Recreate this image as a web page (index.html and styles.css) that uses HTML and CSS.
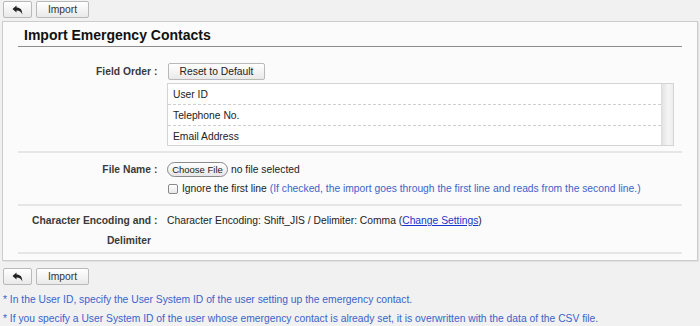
FILE: index.html
```html
<!DOCTYPE html>
<html lang="en">
<head>
  <meta charset="UTF-8">
  <title>Import Emergency Contacts</title>
  <link rel="stylesheet" href="styles.css">
</head>
<body>
  <div class="toolbar">
    <button class="btn btn-back" type="button">
      <svg width="11" height="10" viewBox="0 0 11 10"><path d="M0.5 4 L4.5 0.5 L4.5 2.6 C8 2.6 10.3 4.6 10.3 9.5 C9.2 6.8 7.5 5.6 4.5 5.6 L4.5 7.6 Z" fill="#222"/></svg>
    </button>
    <button class="btn btn-import" type="button">Import</button>
  </div>

  <div class="panel">
    <h1 class="panel-title">Import Emergency Contacts</h1>

    <div class="row row-order">
      <div class="label">Field Order</div>
      <div class="colon">:</div>
      <div class="value">
        <button class="btn btn-reset" type="button">Reset to Default</button>
        <div class="field-list">
          <ul>
            <li>User ID</li>
            <li>Telephone No.</li>
            <li>Email Address</li>
          </ul>
          <div class="scroll-track"></div>
        </div>
      </div>
    </div>

    <div class="row row-file">
      <div class="label">File Name</div>
      <div class="colon">:</div>
      <div class="value">
        <div class="file-line">
          <button class="btn-file" type="button">Choose File</button>
          <span>no file selected</span>
        </div>
        <div class="check-line">
          <span class="checkbox"></span>
          <span>Ignore the first line</span>
          <span class="hint">(If checked, the import goes through the first line and reads from the second line.)</span>
        </div>
      </div>
    </div>

    <div class="row row-encoding">
      <div class="label">Character Encoding and Delimiter</div>
      <div class="colon">:</div>
      <div class="value">
        Character Encoding: Shift_JIS / Delimiter: Comma (<a href="#">Change Settings</a>)
      </div>
    </div>
    <div class="panel-end"></div>
  </div>

  <div class="toolbar toolbar-bottom">
    <button class="btn btn-back" type="button">
      <svg width="11" height="10" viewBox="0 0 11 10"><path d="M0.5 4 L4.5 0.5 L4.5 2.6 C8 2.6 10.3 4.6 10.3 9.5 C9.2 6.8 7.5 5.6 4.5 5.6 L4.5 7.6 Z" fill="#222"/></svg>
    </button>
    <button class="btn btn-import" type="button">Import</button>
  </div>

  <div class="notes">
    <p>* In the User ID, specify the User System ID of the user setting up the emergency contact.</p>
    <p>* If you specify a User System ID of the user whose emergency contact is already set, it is overwritten with the data of the CSV file.</p>
  </div>
</body>
</html>
```

FILE: styles.css
```css
body {
  margin: 0;
  background-color: #f1f1f1;
  font-family: "Liberation Sans", Arial, sans-serif;
  font-size: 10.3px;
  color: #222;
}
.toolbar {
  display: flex;
  gap: 4px;
  padding: 1px 0 0 3px;
  height: 17px;
}
.toolbar-bottom {
  margin-top: 6px;
}
.btn {
  box-sizing: border-box;
  height: 17px;
  padding: 0;
  border: 1px solid #b9b9b9;
  border-radius: 2px;
  background: linear-gradient(#ffffff, #e9e9e9);
  font-family: inherit;
  font-size: 10.3px;
  color: #333;
  display: flex;
  align-items: center;
  justify-content: center;
}
.btn-back {
  width: 29px;
}
.btn-import {
  width: 53px;
}
.panel {
  margin: 3px 2px 0 2px;
  background-color: #fbfbfb;
  border: 1px solid #cccccc;
  box-shadow: 1px 1px 0 #e2e2e2;
  padding: 0 15px;
}
.panel-title {
  margin: 0;
  padding: 5px 0 0 6px;
  height: 19px;
  font-size: 14px;
  font-weight: bold;
  color: #111;
  border-bottom: 1px solid #8c8c8c;
}
.row {
  display: grid;
  grid-template-columns: 133px 16px 1fr;
  border-bottom: 2px solid #e6e6e6;
  line-height: 20px;
}
.label {
  text-align: right;
  font-weight: bold;
  color: #3a3a3a;
}
.colon {
  padding-left: 3px;
  font-weight: bold;
  color: #3a3a3a;
}
.row-order {
  padding: 14px 0 5px 0;
}
.row-order .label,
.row-order .colon {
  padding-top: 1px;
}
.btn-reset {
  width: 97px;
  margin: 2px 0 3px 1px;
  color: #222;
}
.field-list {
  display: flex;
  width: 507px;
  height: 63px;
  box-sizing: border-box;
  border: 1px solid #d4d4d4;
  background-color: #fff;
}
.field-list ul {
  flex: 1;
  margin: 0;
  padding: 0;
  list-style: none;
}
.field-list li {
  height: 21px;
  line-height: 21px;
  padding-left: 5px;
  border-bottom: 1px dashed #cfcfcf;
  box-sizing: border-box;
}
.field-list li:last-child {
  border-bottom: none;
}
.scroll-track {
  width: 11px;
  border-left: 1px solid #ddd;
  background: linear-gradient(90deg, #e3e3e3, #f6f6f6 60%, #ececec);
}
.row-file {
  padding: 7px 0 6px 0;
}
.file-line {
  display: flex;
  align-items: center;
  gap: 3px;
  height: 19px;
}
.btn-file {
  box-sizing: border-box;
  height: 15px;
  width: 61px;
  padding: 0;
  border: 1px solid #8a8a8a;
  border-radius: 8px;
  background: linear-gradient(#ffffff, #e6e6e6);
  font-family: inherit;
  font-size: 9.5px;
  color: #222;
}
.check-line {
  display: flex;
  align-items: center;
  gap: 4px;
  height: 19px;
}
.checkbox {
  width: 8px;
  height: 8px;
  margin-left: 1px;
  border: 1px solid #8a8a8a;
  border-radius: 2px;
  background: linear-gradient(#fff, #e8e8e8);
}
.hint {
  color: #3b63c9;
  margin-left: -1px;
}
.row-encoding {
  padding: 5px 0 1px 0;
}
.value a {
  color: #1a33cc;
}
.panel-end {
  height: 6px;
}
.notes {
  margin-top: 5px;
  padding-left: 3px;
  color: #3b63c9;
}
.notes p {
  margin: 0;
  line-height: 19px;
}
```
